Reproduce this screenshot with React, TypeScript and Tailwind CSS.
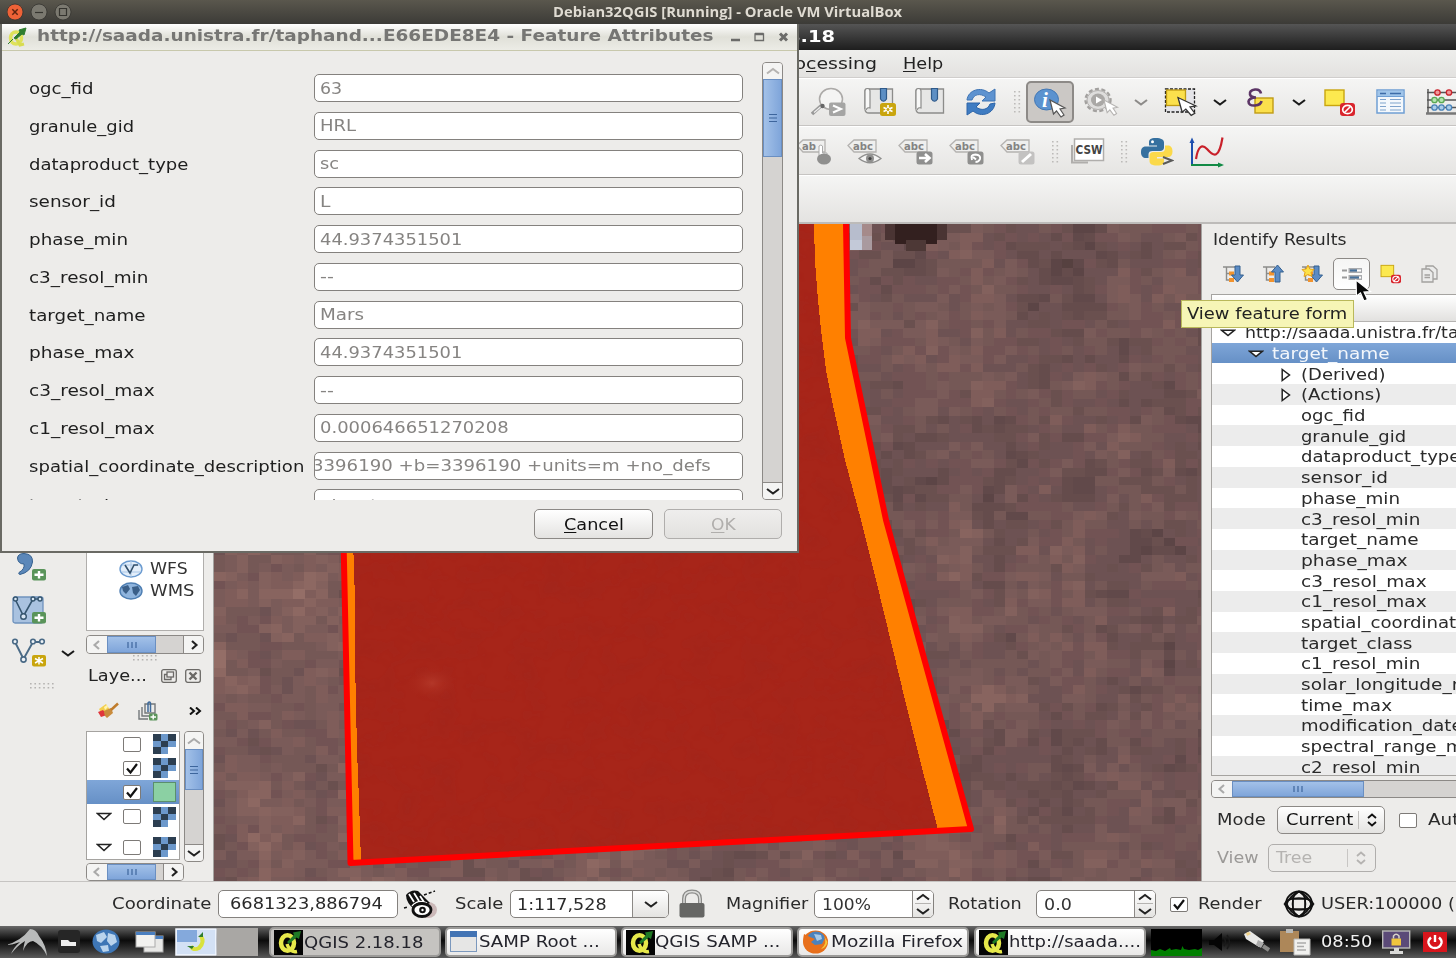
import React, { useLayoutEffect, useRef, useState } from "react";

/* ---------- text ---------- */

type TxtProps = { children: React.ReactNode; w?: number; className?: string };

/* Wide-set label; with `w` the glyph run is scaled to fill exactly that width. */
function Txt({ children, w, className = "" }: TxtProps) {
  const ref = useRef<HTMLSpanElement>(null);
  const [scale, setScale] = useState(1.19);
  useLayoutEffect(() => {
    if (w && ref.current) setScale(w / ref.current.offsetWidth);
  }, [w]);
  return (
    <span className={`inline-block shrink-0 whitespace-nowrap ${className}`} style={w ? { width: w } : undefined}>
      <span ref={ref} className="inline-block origin-left whitespace-nowrap" style={{ transform: `scaleX(${scale})` }}>
        {children}
      </span>
    </span>
  );
}

/* ---------- map ---------- */

function hash(x: number, y: number, s: number) {
  let h = (x * 374761393 + y * 668265263 + s * 1442695041) | 0;
  h = Math.imul(h ^ (h >>> 13), 1274126177);
  return ((h ^ (h >>> 16)) >>> 0) / 4294967295;
}

function smooth(x: number, y: number, s: number) {
  const xi = Math.floor(x);
  const yi = Math.floor(y);
  const fx = x - xi;
  const fy = y - yi;
  const a = hash(xi, yi, s) * (1 - fx) + hash(xi + 1, yi, s) * fx;
  const b = hash(xi, yi + 1, s) * (1 - fx) + hash(xi + 1, yi + 1, s) * fx;
  return a * (1 - fy) + b * fy;
}

const TERRAIN = [
  "#4f3d3b", "#564140", "#5c4546", "#61494a", "#654c4c", "#6a504f", "#6d5253", "#725354",
  "#755856", "#7a5b59", "#7f5d5a", "#83615d", "#88645f", "#8d6862", "#946e67", "#9c766e",
];

function terrainPaths() {
  const d = TERRAIN.map(() => "");
  const cw = 11.3;
  const ch = 8.7;
  for (let j = 0; j < 76; j++) {
    for (let i = 0; i < 88; i++) {
      const x = 214 + i * cw;
      const y = 224 + j * ch;
      if (x > 365 && x < 800 && y < 830) continue;
      const streak = Math.max(0, 1 - Math.abs(x - 955) / 45) * (y > 420 && y < 720 ? 2.2 : 0.6);
      const mean = (x < 400 ? 8.8 : x < 1000 && y > 800 ? 8.2 : 6.3) + streak;
      const n =
        mean +
        (smooth(i / 4, j / 6, 3) - 0.5) * 4.5 +
        (smooth(i / 1.4, j / 2.2, 9) - 0.5) * 5.5 +
        (hash(i, j, 21) - 0.5) * 4;
      const k = Math.max(0, Math.min(15, Math.round(n)));
      d[k] += `M${x.toFixed(1)} ${y.toFixed(1)}h11.8v9.2h-11.8z`;
    }
  }
  return d;
}

const PATHS = terrainPaths();

function MapCanvas() {
  return (
    <svg className="block h-[657px] w-[987px] shrink-0" viewBox="214 224 987 657">
      <defs>
        <radialGradient id="crater">
          <stop offset="0" stopColor="#c04a38" stopOpacity="0.5" />
          <stop offset="1" stopColor="#a82618" stopOpacity="0" />
        </radialGradient>
        <filter id="grain" x="0" y="0" width="1" height="1">
          <feTurbulence type="fractalNoise" baseFrequency="0.035 0.05" numOctaves="3" seed="4" />
          <feColorMatrix values="0 0 0 0 0.25  0 0 0 0 0.02  0 0 0 0 0.02  0.9 0 0 0 -0.38" />
          <feComposite in2="SourceGraphic" operator="in" />
        </filter>
      </defs>
      <rect x="214" y="224" width="987" height="657" fill="#6f5350" />
      <g shapeRendering="crispEdges">
        {PATHS.map((p, i) => (
          <path key={i} d={p} fill={TERRAIN[i]} />
        ))}
        <path d="M850 224h12v16h-12z" fill="#b7bdcd" />
        <path d="M850 240h12v10h-12z" fill="#c3c9d8" />
        <path d="M862 232h10v18h-10z" fill="#a99a9f" />
        <path d="M862 224h10v12h-10z" fill="#a58a8a" />
        <path d="M885 224h62v16h-62z" fill="#4a3433" />
        <path d="M895 224h42v20h-42z" fill="#33201f" />
        <path d="M906 240h20v11h-20z" fill="#4d3836" />
      </g>
      <path d="M342 224H846L848 338L886 520L971 829L350 863z" fill="#a72519" />
      <path d="M342 224H846L848 338L886 520L971 829L350 863z" fill="#fff" filter="url(#grain)" opacity="0.35" />
      <ellipse cx="432" cy="683" rx="26" ry="18" fill="url(#crater)" />
      <path
        d="M814 224L815 262L818 300L821 330L826 370L834 410L845 460L861 520L876 580L893 650L905 700L920 760L938 830L972 829L886 520L848 338L846 224z"
        fill="#ff8000"
        shapeRendering="crispEdges"
      />
      <path d="M345 540H353L355 600V660L357 750L359 800L361 862H350z" fill="#ff8000" shapeRendering="crispEdges" />
      <path d="M343.500 540L350.500 863L971 829L886 520L848 338L846 224" fill="none" stroke="#fe0000" strokeWidth="6" strokeLinejoin="round" />
    </svg>
  );
}

/* ---------- small widgets ---------- */

function Chevron({ dir = "down", className = "" }: { dir?: "down" | "up" | "left" | "right"; className?: string }) {
  const d = {
    down: "M1 3L7 7.500L13 3",
    up: "M1 7.500L7 3L13 7.500",
    left: "M9 1L4.500 5L9 9",
    right: "M5 1L9.500 5L5 9",
  }[dir];
  return (
    <svg className={`block h-[10px] w-[14px] shrink-0 ${className}`} viewBox="0 0 14 10" fill="none" stroke="currentColor" strokeWidth="2.100">
      <path d={d} />
    </svg>
  );
}

function Dots({ vertical = false, className = "" }: { vertical?: boolean; className?: string }) {
  return vertical ? (
    <svg className={`block h-[22px] w-[8px] shrink-0 ${className}`} viewBox="0 0 8 22" fill="#bdbbb9">
      {[0, 4, 8, 12, 16, 20].map((y) => (
        <path key={y} d={`M1 ${y}h1.600v1.600h-1.600zM5.500 ${y}h1.600v1.600h-1.600z`} />
      ))}
    </svg>
  ) : (
    <svg className={`block h-[6px] w-[24px] shrink-0 ${className}`} viewBox="0 0 24 6" fill="#b5b3b1">
      {[0, 4.4, 8.8, 13.2, 17.6, 22].map((x) => (
        <path key={x} d={`M${x} 0h1.600v1.600h-1.600zM${x} 4h1.600v1.600h-1.600z`} />
      ))}
    </svg>
  );
}

const btn = "flex shrink-0 items-center justify-center border-[1.500px] border-[#8c8986] bg-linear-to-b from-white to-[#e4e3e1]";
const hThumb = "flex shrink-0 items-center justify-center border border-[#6a8fc2] bg-linear-to-b from-[#a3c1e8] to-[#7fa5da] text-[#3d659c]";
const vThumb = "flex shrink-0 items-center justify-center border border-[#6a8fc2] bg-linear-to-r from-[#a3c1e8] to-[#7fa5da] text-[#3d659c]";

function Grip({ vertical = false }: { vertical?: boolean }) {
  return (
    <svg className="block h-[10px] w-[10px]" viewBox="0 0 10 10" stroke="currentColor" strokeWidth="1.200">
      <path d={vertical ? "M1 1.500h8M1 5h8M1 8.500h8" : "M1 2v6M5 2v6M9 2v6"} />
    </svg>
  );
}

function Check({ on = false, className = "" }: { on?: boolean; className?: string }) {
  return (
    <span className={`block h-[15px] w-[18px] shrink-0 rounded-[2px] border-[1.500px] border-[#7d7a77] bg-white ${className}`}>
      {on && (
        <svg className="block h-full w-full" viewBox="0 0 16 12" fill="none" stroke="#111" strokeWidth="2.200">
          <path d="M3 6L6.500 10L13 1.500" />
        </svg>
      )}
    </span>
  );
}

function Spin({ value, tw, className }: { value: string; tw: number; className: string }) {
  return (
    <div className={`flex h-[28px] shrink-0 overflow-hidden rounded-[5px] border-[1.500px] border-[#84817e] bg-white ${className}`}>
      <div className="flex flex-1 items-center pt-[2px] pl-[7px] text-[#333]">
        <Txt w={tw}>{value}</Txt>
      </div>
      <div className="flex w-[21px] flex-col items-center justify-around border-l border-[#8c8986] bg-linear-to-b from-white to-[#e4e3e1] text-[#222]">
        <Chevron dir="up" className="w-[12px]" />
        <div className="h-px w-[16px] bg-[#b5b3b1]" />
        <Chevron className="w-[12px]" />
      </div>
    </div>
  );
}

function UpDown() {
  return (
    <svg className="block h-[14px] w-[10px]" viewBox="0 0 10 14" fill="none" stroke="currentColor" strokeWidth="1.800">
      <path d="M1 5L5 1.500L9 5M1 9L5 12.500L9 9" />
    </svg>
  );
}

const CURSOR = "M0 0L3.500 14L6.500 11L11 17L14 15L10 9L15 8z";

function Minus({ x, y }: { x: number; y: number }) {
  return (
    <g transform={`translate(${x} ${y})`}>
      <rect width="15" height="13" rx="3" fill="#d9252d" />
      <ellipse cx="7.500" cy="6.500" rx="4.800" ry="4.200" fill="none" stroke="#fff" strokeWidth="1.700" />
      <path d="M4 10L11 3" stroke="#fff" strokeWidth="1.600" />
    </g>
  );
}

/* ---------- tool bars ---------- */

function Bookmark({ star = false, className = "" }: { star?: boolean; className?: string }) {
  return (
    <svg className={`block h-[30px] w-[34px] shrink-0 ${className}`} viewBox="0 0 34 30">
      <path d="M3 2H28.500V26H5Q1 26 1 22V4Q1 2 3 2z" fill="#e6e6e5" stroke="#8c8c8a" strokeWidth="1.300" />
      <path d="M1 22V4Q1 1.500 3.500 1.500T6 4V21Q3 20 2 23" fill="#f8f8f7" stroke="#8c8c8a" strokeWidth="1.200" />
      <path d="M16.500 1.500H22.500V12Q19.500 16.500 16.500 12z" fill="#5d8fc4" stroke="#2f5a8a" strokeWidth="1.200" />
      {star && (
        <g>
          <rect x="16" y="16" width="16" height="13" rx="2.500" fill="#c9a50e" />
          <path d="M24 18v9M19.500 20.500l9 4M28.500 20.500l-9 4" stroke="#fff" strokeWidth="1.600" />
          <circle cx="24" cy="22.500" r="2" fill="#c9a50e" stroke="#fff" />
        </g>
      )}
    </svg>
  );
}

function Tag({ label = "abc", className = "", children }: { label?: string; className?: string; children: React.ReactNode }) {
  return (
    <svg className={`block h-[28px] w-[35px] shrink-0 ${className}`} viewBox="0 0 35 28">
      <path d="M1 7.500L7 2H29V14H7z" fill="#efefee" stroke="#b4b2b0" strokeWidth="1.300" />
      <text x="6" y="12" fontSize="11" fontWeight="bold" fill="#838383" textLength={label === "abc" ? 20 : 14} lengthAdjust="spacingAndGlyphs">
        {label}
      </text>
      {children}
    </svg>
  );
}

function ToolbarMain() {
  return (
    <div className="flex h-[48px] items-center border-t border-b border-t-white border-b-[#c6c4c2] bg-linear-to-b from-[#f5f5f4] to-[#e6e5e3] pl-[811px]">
      <svg className="block h-[30px] w-[36px] shrink-0" viewBox="0 0 36 30">
        <path d="M1 27L11 18" stroke="#999" strokeWidth="3.500" />
        <path d="M3 25.500L10 19.500" stroke="#eee" strokeWidth="1.200" />
        <ellipse cx="20" cy="12" rx="11.500" ry="10.500" fill="#f4f4f3" stroke="#acaaa8" strokeWidth="1.500" />
        <circle cx="11.500" cy="19" r="2.200" fill="#666" />
        <rect x="18" y="15.500" width="16.500" height="13.500" rx="2" fill="#a5a5a4" />
        <path d="M22 18.500L30 22L22 25.500" fill="none" stroke="#fff" strokeWidth="2" />
      </svg>
      <Bookmark star className="ml-[17px]" />
      <Bookmark className="ml-[17px]" />
      <svg className="ml-[16px] block h-[30px] w-[32px] shrink-0" viewBox="0 0 32 30">
        <path d="M2 13C3 3 16-1 24 6L30 2V14H17L21 10C15 6 9 7 7 13z" fill="#5e93d0" stroke="#3e74b4" />
        <path d="M30 16C29 27 16 31 8 24L2 28V16H15L11 20C16 24 23 23 25 17z" fill="#3f7cc2" stroke="#2e65a8" />
      </svg>
      <Dots vertical className="ml-[16px]" />
      <div className="ml-[5px] flex h-[42px] w-[48px] shrink-0 items-center justify-center rounded-[5px] border-2 border-[#8d8a87] bg-[#cbc8c5]">
        <svg className="block h-[32px] w-[36px]" viewBox="0 0 36 32">
          <ellipse cx="14.500" cy="13.500" rx="12" ry="10.500" fill="#5b92cf" stroke="#4478b4" />
          <text x="10" y="21" fontSize="21" fontStyle="italic" fontWeight="bold" fontFamily="Liberation Serif, serif" fill="#fff">i</text>
          <path d={CURSOR} transform="translate(18 14)" fill="#fff" stroke="#555" strokeWidth="1.200" />
        </svg>
      </div>
      <svg className="ml-[10px] block h-[30px] w-[36px] shrink-0" viewBox="0 0 36 30">
        <ellipse cx="14" cy="13" rx="12.500" ry="11" fill="#e6e5e4" stroke="#a3a19f" strokeWidth="2.400" strokeDasharray="4 2.500" />
        <ellipse cx="14" cy="13" rx="11" ry="9.500" fill="#dedddc" stroke="#b2b0ae" />
        <ellipse cx="14" cy="13" rx="7" ry="6.500" fill="#aaa8a6" />
        <path d="M12 9.500L18 13L12 16.500z" fill="#fff" />
        <path d={CURSOR} transform="translate(20 13) scale(.9)" fill="#fff" stroke="#b5b3b1" strokeWidth="1.200" />
      </svg>
      <Chevron className="ml-[14px] text-[#8d8b89]" />
      <svg className="ml-[16px] block h-[30px] w-[34px] shrink-0" viewBox="0 0 34 30">
        <rect x="1.500" y="2" width="29" height="23" fill="#e4e4e8" stroke="#222" strokeWidth="1.300" strokeDasharray="3 1.500" />
        <rect x="2.500" y="3" width="19" height="15.500" fill="#fbe04c" stroke="#c09c14" strokeWidth="1.300" />
        <path d={CURSOR} transform="translate(14 10.500) scale(1.200 1.050)" fill="#fff" stroke="#333" strokeWidth="1.100" />
      </svg>
      <Chevron className="ml-[15px] text-[#1a1a1a]" />
      <svg className="ml-[19px] block h-[30px] w-[30px] shrink-0" viewBox="0 0 30 30">
        <rect x="9" y="11" width="18" height="15" fill="#fbe04c" stroke="#c09c14" strokeWidth="1.400" />
        <path d="M15 6.500Q14 2 9 2.500Q3 3.500 4 7.500Q5 10.500 10 10.500Q3 11 2.500 14.500Q2.500 19 9 18.500Q15 18 15.500 14" fill="none" stroke="#5c3566" strokeWidth="2.600" />
      </svg>
      <Chevron className="ml-[16px] text-[#1a1a1a]" />
      <svg className="ml-[17px] block h-[30px] w-[34px] shrink-0" viewBox="0 0 34 30">
        <rect x="2" y="3" width="19" height="15.500" fill="#fce94f" stroke="#c9a50e" strokeWidth="1.400" />
        <Minus x={17} y={16} />
      </svg>
      <svg className="ml-[19px] block h-[30px] w-[30px] shrink-0" viewBox="0 0 30 30">
        <rect x="1" y="3" width="27" height="23" fill="#f4f8fc" stroke="#6f9fd4" strokeWidth="1.500" />
        <rect x="2" y="4" width="25" height="5.500" fill="#9fc5ea" />
        <path d="M1 9.500H28" stroke="#6f9fd4" />
        <path d="M4 6.500H10M14 6.500H25" stroke="#3d6ca8" strokeWidth="1.500" />
        <path d="M4 12.500H10M4 16H10M4 19.500H10M4 23H10M14 12.500H25M14 16H25M14 19.500H25M14 23H25" stroke="#7fa3cc" strokeWidth="1.200" />
      </svg>
      <svg className="ml-[20px] block h-[30px] w-[34px] shrink-0" viewBox="0 0 34 30">
        <path d="M2 2V26M1 5.500H34M1 13H34M1 20.500H34" stroke="#555" strokeWidth="1.400" />
        <path d="M0 26.500H34" stroke="#777" strokeWidth="2.500" />
        <g strokeWidth="1.300">
          <g fill="#f09a9a" stroke="#c8242c"><circle cx="11.500" cy="5.500" r="2.700" /><circle cx="23" cy="5.500" r="2.700" /></g>
          <g fill="#b5e6b0" stroke="#5aa854"><circle cx="8.500" cy="13" r="2.700" /><circle cx="15.500" cy="13" r="2.700" /></g>
          <g fill="#a9cdea" stroke="#4a83b8"><circle cx="8.500" cy="20.500" r="2.700" /><circle cx="15.500" cy="20.500" r="2.700" /><circle cx="23" cy="20.500" r="2.700" /></g>
        </g>
      </svg>
    </div>
  );
}

function ToolbarLabels() {
  return (
    <div className="flex h-[49px] items-center border-t border-b border-t-white border-b-[#c6c4c2] bg-linear-to-b from-[#f5f5f4] to-[#e6e5e3] pt-[2px] pl-[796px]">
      <Tag label="ab">
        <path d="M23 20V8Q25 6 26.500 8V15H31V20" fill="#fff" stroke="#aaa" />
        <ellipse cx="28" cy="21" rx="7" ry="5.500" fill="#8f8f8e" />
      </Tag>
      <Tag className="ml-[16px]">
        <path d="M12 20.500Q23 11.500 34 20.500Q23 29 12 20.500z" fill="#f4f4f3" stroke="#8f8f8e" strokeWidth="1.300" />
        <circle cx="23" cy="20.500" r="4" fill="#8f8f8e" />
        <circle cx="23" cy="20.500" r="1.600" fill="#444" />
      </Tag>
      <Tag className="ml-[16px]">
        <rect x="18.500" y="13.500" width="16" height="13" rx="2.500" fill="#8f8f8e" />
        <path d="M21 20H31M27 16L31.500 20L27 24" fill="none" stroke="#fff" strokeWidth="2.600" />
      </Tag>
      <Tag className="ml-[16px]">
        <rect x="18.500" y="13.500" width="16" height="13" rx="2.500" fill="#8f8f8e" />
        <path d="M23 22Q21 16.500 26.500 16.500Q32 17 31 21Q30 24 26.500 24M24 19L27 21.500" fill="none" stroke="#fff" strokeWidth="2" />
      </Tag>
      <Tag className="ml-[16px]">
        <rect x="18.500" y="13.500" width="16" height="13" rx="2.500" fill="#c3c2c1" />
        <path d="M22 24L31 16" stroke="#fff" strokeWidth="3" />
      </Tag>
      <Dots vertical className="ml-[16px]" />
      <svg className="ml-[12px] block h-[30px] w-[36px] shrink-0" viewBox="0 0 36 30">
        <path d="M1 8V25.500H17" fill="none" stroke="#b0aeac" strokeWidth="2" />
        <rect x="3.500" y="2" width="29" height="21.500" fill="#fff" stroke="#b0aeac" strokeWidth="1.500" />
        <text x="4.500" y="16.500" fontSize="11.500" fontWeight="bold" fill="#444" textLength="27" lengthAdjust="spacingAndGlyphs">CSW</text>
      </svg>
      <Dots vertical className="ml-[13px]" />
      <svg className="ml-[12px] block h-[30px] w-[34px] shrink-0" viewBox="0 0 34 30">
        <path d="M16 1C10 1 9 3 9 5.500V8.500H17V9.500H6C2 9.500 1 12 1 15.500S3 21 6 21H8.500V17.500C8.500 15 10 14 12.500 14H20C22.500 14 24 12.500 24 10.500V5.500C24 2.500 21 1 16 1z" fill="#35709f" />
        <path d="M17 28.500C23 28.500 24 26.500 24 24V21.500H17V20H28C31 20 32.500 18 32.500 14.500S31 8.500 28 8.500H25V11.500C25 14 23.500 15 21 15H13.500C11 15 9.500 16.500 9.500 18.500V24C9.500 27 12 28.500 17 28.500z" fill="#fbd94a" />
        <circle cx="12.500" cy="4.800" r="1.500" fill="#fff" />
        <path d="M23 20L32 23.500L23 27" fill="none" stroke="#5a5a58" strokeWidth="1.900" />
      </svg>
      <svg className="ml-[14px] block h-[32px] w-[38px] shrink-0" viewBox="0 0 38 32">
        <path d="M4 29V5" stroke="#1d4fae" strokeWidth="2" />
        <path d="M4 1.500L1.500 7H6.500z" fill="#1d4fae" />
        <path d="M3 29H32" stroke="#128a45" strokeWidth="2" />
        <path d="M36 29L30 26.500V31.500z" fill="#128a45" />
        <path d="M8 23C10 10 14 8 19 13C26 21 31 23 34.500 1.500" fill="none" stroke="#c9202a" strokeWidth="2.200" />
      </svg>
    </div>
  );
}

/* ---------- left docks ---------- */

function Raster() {
  return (
    <svg className="block h-[20px] w-[23px] shrink-0" viewBox="0 0 3 3" preserveAspectRatio="none" shapeRendering="crispEdges">
      <path d="M0 0h3v3h-3z" fill="#6c98cb" />
      <path d="M0 0h1v1h-1zM2 0h1v1h-1zM1 1h1v1h-1zM0 2h1v1h-1z" fill="#2c3e50" />
      <path d="M2 2h1v1h-1z" fill="#fff" />
    </svg>
  );
}

function Plus({ star = false }: { star?: boolean }) {
  return (
    <g>
      <rect x="21" y="17" width="14" height="11.500" rx="2" fill={star ? "#c9a50e" : "#5a945a"} />
      <path d={star ? "M28 19v7.500M24 20.500l8 4.500M32 20.500l-8 4.500" : "M28 19v7.500M23.500 22.700h9"} stroke="#fff" strokeWidth={star ? 1.5 : 2.4} />
    </g>
  );
}

function SideTools() {
  return (
    <div className="flex w-[86px] shrink-0 flex-col pt-[328px]">
      <svg className="ml-[11px] block h-[30px] w-[36px] shrink-0" viewBox="0 0 36 30">
        <path d="M6.500 6Q7 1.500 13 1.500Q22 2 21.500 10Q20 20 9 22.500Q7 22 8 20.500Q14 17 13 12Q7 12 6.500 6z" fill="#5b87b9" stroke="#35608f" />
        <Plus />
      </svg>
      <svg className="mt-[13px] ml-[11px] block h-[30px] w-[36px] shrink-0" viewBox="0 0 36 30">
        <rect x="2" y="2" width="30" height="26" rx="2" fill="#a9c2e0" stroke="#6f92bd" strokeWidth="1.300" />
        <path d="M4 4L12.500 21L22 4H30" fill="none" stroke="#35556f" strokeWidth="1.600" />
        <g fill="#d8e6f4" stroke="#35556f" strokeWidth="1.400"><circle cx="4.500" cy="4" r="2" /><circle cx="12.500" cy="21.500" r="2.800" /><circle cx="22" cy="4" r="2" /><circle cx="29" cy="4" r="2" /></g>
        <Plus />
      </svg>
      <div className="mt-[13px] flex items-center">
        <svg className="ml-[11px] block h-[30px] w-[36px] shrink-0" viewBox="0 0 36 30">
          <path d="M4 4L12.500 21L22 4H31" fill="none" stroke="#4a6a86" strokeWidth="1.900" />
          <g fill="#eef3f8" stroke="#4a6a86" strokeWidth="1.600"><circle cx="4" cy="3.500" r="2.300" /><circle cx="12.500" cy="21.500" r="2.600" /><circle cx="22" cy="3.500" r="2.300" /><circle cx="31" cy="3.500" r="2.300" /></g>
          <Plus star />
        </svg>
        <Chevron className="ml-[14px] text-[#1a1a1a]" />
      </div>
      <Dots className="mt-[15px] ml-[30px]" />
    </div>
  );
}

const LAYERS = [
  { on: false, arrow: false, sel: false, h: "h-[24px]" },
  { on: true, arrow: false, sel: false, h: "h-[24px]" },
  { on: true, arrow: false, sel: true, h: "h-[24px]" },
  { on: false, arrow: true, sel: false, h: "h-[25px]" },
  { on: false, arrow: true, sel: false, h: "h-[36px]" },
];

function Docks() {
  return (
    <div className="flex w-[118px] shrink-0 flex-col">
      <div className="flex h-[407px] shrink-0 flex-col justify-end border border-[#b0aeac] bg-white pb-[28px] pl-[32px] text-[#333]">
        <div className="flex h-[22px] items-center">
          <svg className="block h-[18px] w-[24px]" viewBox="0 0 24 18">
            <ellipse cx="12" cy="9" rx="11" ry="8" fill="#e3eefa" stroke="#6b9bd0" strokeWidth="1.400" />
            <path d="M3 5H21M3 12H21M12 1V17" stroke="#a9c6e6" />
            <path d="M6 5L11 13L15 5H19" fill="none" stroke="#33506c" strokeWidth="1.600" />
          </svg>
          <Txt w={38} className="ml-[7px]">WFS</Txt>
        </div>
        <div className="flex h-[22px] items-center">
          <svg className="block h-[18px] w-[24px]" viewBox="0 0 24 18">
            <ellipse cx="12" cy="9" rx="11" ry="8" fill="#8fb4dd" stroke="#4f7fb3" strokeWidth="1.400" />
            <path d="M3 5L9 3L11 7L7 12L4 9zM13 5L19 4L21 8L17 14L14 11z" fill="#3b5f88" />
          </svg>
          <Txt w={44} className="ml-[7px]">WMS</Txt>
        </div>
      </div>
      <div className="mt-[4px] flex h-[19px] shrink-0 overflow-hidden rounded-[4px] border border-[#8c8986] bg-[#d5d3d1]">
        <div className="flex w-[20px] items-center justify-center bg-[#f4f4f3] text-[#aaa]"><Chevron dir="left" /></div>
        <div className={`${hThumb} w-[49px]`}><Grip /></div>
        <div className="flex-1" />
        <div className="flex w-[20px] items-center justify-center border-l border-[#8c8986] bg-[#f4f4f3] text-[#222]"><Chevron dir="right" /></div>
      </div>
      <Dots className="mt-px ml-[47px]" />
      <div className="mt-[3px] flex h-[24px] items-center pl-[2px] text-[#222]">
        <Txt w={59}>Laye...</Txt>
        <svg className="ml-[14px] block h-[14px] w-[16px]" viewBox="0 0 16 14" fill="none" stroke="#6b6966" strokeWidth="1.300">
          <rect x=".7" y=".7" width="14.600" height="12.600" rx="2" /><rect x="6" y="3" width="6.500" height="5" /><path d="M6 5.500H3.500V10.500H10V8" />
        </svg>
        <svg className="ml-[8px] block h-[14px] w-[16px]" viewBox="0 0 16 14" fill="none" stroke="#6b6966" strokeWidth="1.300">
          <rect x=".7" y=".7" width="14.600" height="12.600" rx="2" /><path d="M4.500 3.500L11.500 10.500M11.500 3.500L4.500 10.500" strokeWidth="2.400" />
        </svg>
      </div>
      <div className="mt-[11px] flex h-[24px] items-center">
        <svg className="ml-[11px] block h-[18px] w-[22px]" viewBox="0 0 22 18">
          <path d="M2 7L9 2L13 8L6 14z" fill="#f3cf4d" /><path d="M1 10L6 8L10 13L4 15z" fill="#e0353b" /><path d="M7 5L10 3L11 5L8 8z" fill="#fff3b0" />
          <path d="M7 9L14 6L16 11L10 16Q7 14 7 9z" fill="#c98b3c" /><path d="M14 8L21 1.500" stroke="#c07c2c" strokeWidth="2.500" />
        </svg>
        <svg className="ml-[18px] block h-[20px] w-[22px]" viewBox="0 0 22 20" fill="none" stroke="#73777a" strokeWidth="1.400">
          <path d="M2 9V18H11M5 6V15H14M8 3H18V12H8z" /><path d="M11 11V2Q12.500 0 13.500 2V11" stroke="#3f6b9c" strokeWidth="1.500" />
          <rect x="12" y="12.500" width="8.500" height="7" rx="1.500" fill="#5a945a" stroke="none" /><path d="M16.200 13.500v5M13.500 16h5.500" stroke="#fff" />
        </svg>
        <svg className="ml-[30px] block h-[8px] w-[13px]" viewBox="0 0 13 8" fill="none" stroke="#111" strokeWidth="2"><path d="M1 .5L5 4L1 7.500M7 .5L11 4L7 7.500" /></svg>
      </div>
      <div className="mt-[8px] flex">
        <div className="flex h-[129px] w-[94px] shrink-0 flex-col overflow-hidden border border-[#a5a3a0] bg-white">
          {LAYERS.map((l, i) => (
            <div key={i} className={`flex shrink-0 items-center pl-[9px] ${l.h} ${l.sel ? "bg-linear-to-b from-[#7fa6d8] to-[#6690c6]" : ""}`}>
              <svg className="block h-[9px] w-[16px]" viewBox="0 0 16 9">
                {l.arrow && <path d="M1.500 1.500H14.500L8 7.500z" fill="#fff" stroke="#222" strokeWidth="1.600" />}
              </svg>
              <Check on={l.on} className="ml-[11px]" />
              <span className="ml-[12px] block">
                {l.sel ? <span className="block h-[20px] w-[23px] border border-[#5b8f6c] bg-[#8bd0a3]" /> : <Raster />}
              </span>
            </div>
          ))}
        </div>
        <div className="ml-[4px] flex h-[131px] w-[21px] flex-col overflow-hidden rounded-[4px] border border-[#8c8986] bg-[#d5d3d1]">
          <div className="flex h-[17px] items-center justify-center bg-[#f4f4f3] text-[#aaa]"><Chevron dir="up" className="w-[11px]" /></div>
          <div className={`${vThumb} h-[41px]`}><Grip vertical /></div>
          <div className="flex-1" />
          <div className="flex h-[17px] items-center justify-center border-t border-[#8c8986] bg-[#f4f4f3] text-[#222]"><Chevron className="w-[11px]" /></div>
        </div>
      </div>
      <div className="mt-px flex h-[18px] w-[98px] shrink-0 overflow-hidden rounded-[4px] border border-[#8c8986] bg-[#d5d3d1]">
        <div className="flex w-[20px] items-center justify-center bg-[#f4f4f3] text-[#aaa]"><Chevron dir="left" /></div>
        <div className={`${hThumb} w-[49px]`}><Grip /></div>
        <div className="flex-1" />
        <div className="flex w-[20px] items-center justify-center border-l border-[#8c8986] bg-[#f4f4f3] text-[#222]"><Chevron dir="right" /></div>
      </div>
    </div>
  );
}

/* ---------- identify panel ---------- */

const FIELDS: [string, number][] = [
  ["ogc_fid", 63], ["granule_gid", 104], ["dataproduct_type", 159], ["sensor_id", 86], ["phase_min", 98], ["c3_resol_min", 118],
  ["target_name", 117], ["phase_max", 105], ["c3_resol_max", 125], ["c1_resol_max", 125], ["spatial_coordinate_description", 275],
  ["target_class", 110], ["c1_resol_min", 118], ["solar_longitude_min", 184], ["time_max", 90], ["modification_date", 160],
  ["spectral_range_min", 178], ["c2_resol_min", 118],
];

function TreeIcon({ kind }: { kind: "down" | "up" | "star" }) {
  return (
    <svg className="block h-[20px] w-[22px] shrink-0" viewBox="0 0 22 20">
      <path d="M1 3H13M4.500 3V16H8M4.500 9.500H8" fill="none" stroke="#8c8c8a" strokeWidth="1.400" />
      <path d="M7 7.500h5v4h-5zM7 14h5v4h-5z" fill="#f2932e" />
      {kind === "up" ? (
        <path d="M15.500 1L21.500 8H18V18H13V8H9.500z" fill="#5b8bc4" stroke="#35608f" />
      ) : (
        <path d="M15.500 18L21.500 11H18V2H13V11H9.500z" fill="#5b8bc4" stroke="#35608f" />
      )}
      {kind === "star" && <path d="M7 1L8.800 5L13 5.500L10 8.500L11 12.500L7 10.500L3 12.500L4 8.500L1 5.500L5.200 5z" fill="#fde047" stroke="#e8a317" />}
    </svg>
  );
}

function IdentifyPanel() {
  return (
    <div className="flex w-[255px] shrink-0 flex-col overflow-hidden border-l border-[#a5a3a0] text-[#2a2a2a]">
      <div className="flex h-[30px] shrink-0 items-center pt-px pl-[11px]"><Txt w={134}>Identify Results</Txt></div>
      <div className="flex h-[40px] shrink-0 items-center pl-[20px]">
        <TreeIcon kind="down" />
        <span className="ml-[18px]"><TreeIcon kind="up" /></span>
        <span className="ml-[17px]"><TreeIcon kind="star" /></span>
        <div className="ml-[10px] flex h-[32px] w-[37px] shrink-0 items-center justify-center rounded-[5px] border-[1.500px] border-[#8c8986] bg-linear-to-b from-[#f5f5f4] to-white">
          <svg className="block h-[16px] w-[22px]" viewBox="0 0 22 16"><path d="M1 4.500H6M1 11.500H6" stroke="#999" strokeWidth="2.200" /><path d="M7.500 4.500H21M7.500 11.500H21" stroke="#a9abae" strokeWidth="5" /><path d="M9 4.500H16M9 11.500H18" stroke="#45719c" strokeWidth="2.200" /><path d="M16 4.500H20M18 11.500H20" stroke="#fff" strokeWidth="2.200" /></svg>
        </div>
        <svg className="ml-[9px] block h-[20px] w-[24px] shrink-0" viewBox="0 0 34 30"><rect x="2" y="2" width="19" height="17" fill="#fce94f" stroke="#c9a50e" strokeWidth="1.400" /><Minus x={17} y={16} /></svg>
        <svg className="ml-[18px] block h-[18px] w-[18px] shrink-0" viewBox="0 0 18 18" fill="#ebebea" stroke="#a3a19f" strokeWidth="1.300"><path d="M5 1H12L16 4.500V14H5z" /><path d="M1 4H8L12 7.500V17H1z" /><path d="M3.500 10H9M3.500 12.500H9" /></svg>
      </div>
      <div className="ml-[9px] flex h-[482px] w-[250px] shrink-0 flex-col overflow-hidden border-[1.500px] border-[#a5a3a0] bg-white">
        <div className="h-[27px] shrink-0 border-b border-[#b5b3b1] bg-linear-to-b from-white to-[#e2e1df]" />
        <div className="flex h-[20.700px] shrink-0 items-center pt-[2px] pl-[8px]">
          <svg className="block h-[8px] w-[16px] shrink-0" viewBox="0 0 16 8"><path d="M1.500 1.200H14.500L8 6.500z" fill="#fff" stroke="#222" strokeWidth="1.600" /></svg>
          <Txt w={284} className="ml-[9px]">http://saada.unistra.fr/taphandle</Txt>
        </div>
        <div className="flex h-[20.700px] shrink-0 items-center bg-linear-to-b from-[#7fa6d8] to-[#6690c6] pt-[2px] pl-[36px] text-[#f2f6fb]">
          <svg className="block h-[8px] w-[16px] shrink-0" viewBox="0 0 16 8"><path d="M1.500 1.200H14.500L8 6.500z" fill="#fff" stroke="#222" strokeWidth="1.600" /></svg>
          <Txt w={118} className="ml-[8px]">target_name</Txt>
        </div>
        {["(Derived)", "(Actions)"].map((t, i) => (
          <div key={t} className={`flex h-[20.700px] shrink-0 items-center pt-[2px] pl-[69px] ${i ? "bg-[#ececec]" : ""}`}>
            <svg className="block h-[14px] w-[10px] shrink-0" viewBox="0 0 10 14"><path d="M1.200 1.500V12.500L8.500 7z" fill="#fff" stroke="#222" strokeWidth="1.500" /></svg>
            <Txt w={i ? 81 : 84} className="ml-[10px]">{t}</Txt>
          </div>
        ))}
        {FIELDS.map(([f, w], i) => (
          <div key={f} className={`flex h-[20.700px] shrink-0 items-center pt-[2px] pl-[89px] ${i % 2 ? "bg-[#ececec]" : ""}`}><Txt w={w + 1}>{f}</Txt></div>
        ))}
      </div>
      <div className="mt-[4px] ml-[9px] flex h-[18px] w-[260px] shrink-0 overflow-hidden rounded-[4px] border border-[#8c8986] bg-[#d5d3d1]">
        <div className="flex w-[20px] items-center justify-center bg-[#f4f4f3] text-[#aaa]"><Chevron dir="left" /></div>
        <div className={`${hThumb} w-[132px]`}><Grip /></div>
      </div>
      <div className="mt-[8px] flex h-[28px] shrink-0 items-center pl-[15px]">
        <Txt w={49}>Mode</Txt>
        <div className={`${btn} ml-[11px] h-[28px] w-[108px] rounded-[5px] text-[#111]`}>
          <Txt w={67}>Current</Txt><span className="ml-[5px] h-[18px] w-px bg-[#c0bebc]" /><span className="ml-[8px]"><UpDown /></span>
        </div>
        <Check className="ml-[14px]" />
        <Txt w={60} className="ml-[11px]">Auto o</Txt>
      </div>
      <div className="mt-[10px] flex h-[28px] shrink-0 items-center pl-[15px] text-[#9b9997]">
        <Txt w={42}>View</Txt>
        <div className="ml-[9px] flex h-[28px] w-[108px] shrink-0 items-center rounded-[5px] border-[1.500px] border-[#b0aeac] pl-[7px] text-[#b5b3b1]">
          <Txt w={36}>Tree</Txt><span className="ml-[35px] h-[18px] w-px bg-[#c8c6c4]" /><span className="ml-[8px]"><UpDown /></span>
        </div>
      </div>
    </div>
  );
}

/* ---------- status bar ---------- */

function StatusBar() {
  return (
    <div className="flex h-[45px] shrink-0 items-center overflow-hidden border-t border-[#c6c4c2] bg-[#edecea] pl-[112px] text-[#2a2a2a]">
      <Txt w={99}>Coordinate</Txt>
      <div className="ml-[7px] flex h-[28px] w-[180px] shrink-0 items-center rounded-[5px] border-[1.500px] border-[#84817e] bg-white pl-[11px]"><Txt w={153}>6681323,886794</Txt></div>
      <svg className="ml-[5px] block h-[30px] w-[34px] shrink-0" viewBox="0 0 34 30">
        <ellipse cx="25" cy="21" rx="9" ry="8" fill="#cbb8b8" />
        <path d="M3 6Q8 0 15 2L27 14L12 21Q3 14 3 6z" fill="#111" />
        <path d="M6 5L11 13M11 4L16 12M17 7L21 13" stroke="#fff" strokeWidth="1.800" />
        <path d="M9 17Q15 10 24 14" fill="none" stroke="#fff" strokeWidth="1.500" />
        <ellipse cx="19" cy="21" rx="9" ry="6.500" fill="#fff" stroke="#111" strokeWidth="2.800" />
        <circle cx="19.500" cy="21" r="3.300" fill="#111" /><circle cx="19.500" cy="21" r="1.200" fill="#fff" />
        <path d="M21 6L32 2M1 19L5 18" stroke="#111" strokeWidth="1.500" strokeDasharray="3 2" />
      </svg>
      <Txt w={48} className="ml-[18px]">Scale</Txt>
      <div className="ml-[7px] flex h-[28px] w-[159px] shrink-0 overflow-hidden rounded-[5px] border-[1.500px] border-[#84817e] bg-white">
        <div className="flex flex-1 items-center pt-[2px] pl-[6px]"><Txt w={90}>1:117,528</Txt></div>
        <div className="flex w-[36px] items-center justify-center border-l border-[#8c8986] bg-linear-to-b from-white to-[#e4e3e1] text-[#222]"><Chevron /></div>
      </div>
      <svg className="ml-[10px] block h-[30px] w-[26px] shrink-0" viewBox="0 0 26 30"><path d="M5 15V10Q5 2.500 13 2.500T21 10V15" fill="none" stroke="#8b8b89" strokeWidth="4" /><path d="M5 15V10Q5 2.500 13 2.500T21 10V15" fill="none" stroke="#dcdcda" strokeWidth="1.500" /><rect x=".5" y="14" width="25" height="14.500" rx="2" fill="#666664" /></svg>
      <Txt w={82} className="ml-[21px]">Magnifier</Txt>
      <Spin value="100%" tw={49} className="ml-[6px] w-[120px]" />
      <Txt w={74} className="ml-[14px]">Rotation</Txt>
      <Spin value="0.0" tw={28} className="ml-[14px] w-[120px]" />
      <Check on className="ml-[14px]" />
      <Txt w={63} className="ml-[10px]">Render</Txt>
      <svg className="ml-[22px] block h-[28px] w-[32px] shrink-0" viewBox="0 0 32 28" fill="none" stroke="#111" strokeWidth="1.500">
        <ellipse cx="16" cy="14" rx="13" ry="12.500" strokeWidth="1.800" /><ellipse cx="16" cy="14" rx="6.500" ry="12.500" /><ellipse cx="16" cy="14" rx="14" ry="6" />
        <path d="M1.500 14L16 1.500L30.500 14L16 26.500zM10 9H22V19H10z" /><path d="M16 1.500Q6 6 4 14Q6 22 16 26.500Q26 22 28 14Q26 6 16 1.500z" />
      </svg>
      <Txt w={134} className="ml-[6px]">USER:100000 (</Txt>
    </div>
  );
}

/* ---------- task bar ---------- */

function QLogo() {
  return (
    <svg className="block h-[25px] w-[29px] shrink-0" viewBox="0 0 29 25">
      <rect width="29" height="25" fill="#050505" />
      <ellipse cx="13.500" cy="13" rx="6.500" ry="7.800" fill="none" stroke="#e6e84a" strokeWidth="4.500" />
      <path d="M13 14Q16 23 23 21.500" fill="none" stroke="#e6e84a" strokeWidth="3.500" />
      <path d="M13 12L20 5L19 2.500L27 1L25 9L22.500 7.500L15 14z" fill="#1f7a25" />
    </svg>
  );
}

const TASK = "flex h-[30px] w-[172px] shrink-0 items-center overflow-hidden rounded-[5px] border-2 border-[#9b9a98] pl-[3px] text-[#24242c]";

function TaskBar() {
  return (
    <div className="flex h-[32px] shrink-0 items-center overflow-hidden bg-linear-to-b from-[#6a6a6a] via-[#0c0c0c] via-45% to-[#5a5a5a] pl-[6px]">
      <svg className="block h-[28px] w-[42px] shrink-0" viewBox="0 0 42 28"><path d="M0 17Q15 13 24 1Q30 1 33 8Q40 17 41 28Q36 17 27 13Q21 13 17 23Q18 16 19 13Q11 18 5 26Q8 19 14 14Q7 17 0 17z" fill="#b9bbbb" /></svg>
      <svg className="ml-[10px] block h-[24px] w-[22px] shrink-0" viewBox="0 0 22 24"><rect width="22" height="23" rx="3" fill="#262626" /><path d="M3 10H10L12 12H18V16H3z" fill="#eee" /></svg>
      <svg className="ml-[12px] block h-[26px] w-[28px] shrink-0" viewBox="0 0 28 26"><ellipse cx="14" cy="12.500" rx="13.500" ry="12" fill="#3e76b5" /><path d="M4 6L12 3L15 8L9 14L5 12zM16 4L23 6L25 13L19 17L15 12zM8 17L16 16L17 22L11 23z" fill="#b9d3ec" /></svg>
      <svg className="ml-[15px] block h-[24px] w-[30px] shrink-0" viewBox="0 0 30 24"><rect x="9" y="6" width="19" height="16" fill="#e8e8e6" stroke="#aaa" /><path d="M9 6H28V9H9z" fill="#4a7fc0" /><rect x="1" y="2" width="19" height="15" fill="#f2f2f0" stroke="#aaa" /><path d="M1 2H20V5H1z" fill="#4a7fc0" /></svg>
      <svg className="ml-[10px] block h-[28px] w-[42px] shrink-0" viewBox="0 0 42 28"><rect x="1" y="1" width="40" height="26" fill="#d3e1f5" stroke="#f4f8ff" strokeWidth="1.500" /><rect x="2" y="2" width="20" height="12" fill="#84a9dc" /><path d="M26 8Q30 14 24 20Q18 23 16 18" fill="none" stroke="#d9e23c" strokeWidth="4" /><path d="M23 9L28 4V9zM12 18H19L17 21z" fill="#2f7d2f" /></svg>
      <div className="h-[28px] w-[41px] shrink-0 bg-[#a9a7a4]" />
      <div className={`${TASK} ml-[11px] bg-[#c5c3c0]`}><QLogo /><Txt w={119} className="mt-[2px] ml-px">QGIS 2.18.18</Txt></div>
      <div className={`${TASK} ml-[4px] bg-linear-to-b from-white to-[#e9e8e7]`}>
        <svg className="block h-[22px] w-[27px] shrink-0" viewBox="0 0 27 22"><rect x=".5" y=".5" width="26" height="20" fill="#e6e6e5" stroke="#7b98bd" /><path d="M0 0H27V6H0z" fill="#4374b4" /></svg>
        <Txt w={121} className="ml-[2px]">SAMP Root ...</Txt>
      </div>
      <div className={`${TASK} ml-[4px] bg-linear-to-b from-white to-[#e9e8e7]`}><QLogo /><Txt w={125}>QGIS SAMP ...</Txt></div>
      <div className={`${TASK} ml-[4px] bg-linear-to-b from-white to-[#e9e8e7]`}>
        <svg className="block h-[24px] w-[27px] shrink-0" viewBox="0 0 27 24"><ellipse cx="13.500" cy="12" rx="12.500" ry="11.500" fill="#e66f1a" /><ellipse cx="14" cy="9" rx="9" ry="7.500" fill="#4b82bd" /><path d="M12 4L19 5L20 9L15 11z" fill="#a8c9e6" /><path d="M2 4L8 7L13 9L9 12L13 15L20 14L24 6Q28 14 20 20Q10 25 4 18Q0 12 2 4z" fill="#e8701c" /><path d="M22 6Q26 13 19 19Q24 18 25.500 12z" fill="#f7c93a" /></svg>
        <Txt w={132} className="ml-[2px]">Mozilla Firefox</Txt>
      </div>
      <div className={`${TASK} ml-[5px] bg-linear-to-b from-white to-[#e9e8e7]`}><QLogo /><Txt w={132} className="ml-px">http://saada....</Txt></div>
      <svg className="ml-[5px] block h-[27px] w-[51px] shrink-0" viewBox="0 0 51 27"><rect width="51" height="27" fill="#000" /><path d="M0 27V21L5 22L9 20L14 22L19 19L20 21L25 20L30 21L31.500 17L33 20L38 21L44 20L47 21L51 19V27z" fill="#008000" /></svg>
      <svg className="ml-[7px] block h-[24px] w-[24px] shrink-0" viewBox="0 0 24 24"><path d="M0 10H5L13 3V21L5 15H0z" fill="#050505" /><path d="M15 8Q18 12 15 16M18 5Q23 12 18 19" fill="none" stroke="#1a1a1a" strokeWidth="1.500" /></svg>
      <svg className="ml-[10px] block h-[24px] w-[28px] shrink-0" viewBox="0 0 28 24"><path d="M1 4L7 1L21 11L16 17L3 9z" fill="#e8e8e6" /><path d="M15 10L21 13L18 18L13 15z" fill="#aaa" /><path d="M20 16L26 20" stroke="#8a8a88" strokeWidth="4" /><path d="M3 3L6 2L8 4L4 6z" fill="#f2d48a" /></svg>
      <svg className="ml-[8px] block h-[28px] w-[32px] shrink-0" viewBox="0 0 32 28"><rect x="1" y="3" width="19" height="21" fill="#ad8759" /><rect x="7" y="1" width="7" height="4" fill="#b9b9b7" /><path d="M15 11H31V27H15z" fill="#f0f0ee" stroke="#b5b5b3" /><path d="M18 15H27M18 18.500H25M18 22H27" stroke="#aaa" strokeWidth="1.300" /></svg>
      <Txt w={51} className="ml-[10px] text-[#f2f2f2]">08:50</Txt>
      <svg className="ml-[10px] block h-[26px] w-[29px] shrink-0" viewBox="0 0 29 26"><rect x=".7" y="2" width="27" height="17" fill="#5b4a78" stroke="#b9b9b7" strokeWidth="1.400" /><path d="M12 19H17V22H21V25H8V22H12z" fill="#d9d9d7" /><rect x="9.500" y="9.500" width="9.500" height="7" fill="#f0c53e" /><path d="M11.500 9.500V7Q14 3.500 17 7V9.500" fill="none" stroke="#d8d4c8" strokeWidth="1.500" /></svg>
      <svg className="ml-[12px] block h-[20px] w-[24px] shrink-0" viewBox="0 0 24 20"><rect width="24" height="20" fill="#d8151c" /><path d="M8 5.500Q5 8 5.500 11Q7 16 12 16T18.500 11Q19 8 16 5.500M12 3V10" fill="none" stroke="#fff" strokeWidth="2.400" /></svg>
    </div>
  );
}

/* ---------- attribute dialog ---------- */

const ATTRS: [string, number, string, number][] = [
  ["ogc_fid", 64, "63", 22], ["granule_gid", 105, "HRL", 36], ["dataproduct_type", 160, "sc", 19], ["sensor_id", 87, "L", 10],
  ["phase_min", 99, "44.9374351501", 142], ["c3_resol_min", 119, "--", 14], ["target_name", 117, "Mars", 44], ["phase_max", 105, "44.9374351501", 142],
  ["c3_resol_max", 126, "--", 14], ["c1_resol_max", 126, "0.000646651270208", 188],
  ["spatial_coordinate_description", 275, "3396190 +b=3396190 +units=m +no_defs", 399], ["target_class", 110, "planet", 58],
];

function AttributeDialog() {
  return (
    <div className="absolute top-[24px] left-0 flex h-[529px] w-[799px] flex-col border-r-2 border-b-2 border-l-2 border-[#6a6a64] bg-[#edecea]">
      <div className="flex h-[27px] shrink-0 items-center border-b border-[#c8c8ac] bg-linear-to-b from-white via-[#e0e0d8] via-50% to-[#ecece6] pl-[4px] font-bold text-[#767674]">
        <svg className="mb-[1px] block h-[20px] w-[22px] shrink-0" viewBox="0 0 22 20"><ellipse cx="10" cy="11" rx="5.500" ry="6" fill="none" stroke="#dfe25a" strokeWidth="3.500" /><path d="M10 11L14 18L18 17" fill="none" stroke="#d8dc50" strokeWidth="3" /><path d="M8 11L14 5L13 3L20 1L18 8L16 7L10 12zM2 17L7 12" fill="#2f7d2f" stroke="#2f7d2f" /></svg>
        <Txt w={677} className="mb-[2px] ml-[9px]">http://saada.unistra.fr/taphand...E66EDE8E4 - Feature Attributes</Txt>
        <svg className="ml-[17px] block h-[10px] w-[60px] shrink-0" viewBox="0 0 60 10" fill="none" stroke="#6b6b69"><path d="M0 8H9" strokeWidth="2.500" /><path d="M24 2H32.500V8.500H24z" strokeWidth="1.300" /><path d="M24 2H32.500" strokeWidth="2.500" /><path d="M49 1.500L56 8.500M56 1.500L49 8.500" strokeWidth="3" /></svg>
      </div>
      <div className="flex h-[449px] shrink-0 overflow-hidden">
        <div className="flex w-[741px] shrink-0 flex-col gap-[9.750px] overflow-hidden pt-[23px] pl-[26px]">
          {ATTRS.map(([label, lw, value, vw], i) => (
            <div key={label} className="flex h-[28px] shrink-0 items-center text-[#1e1e1e]">
              <div className={`w-[286px] shrink-0 pl-[0.500px] ${i === 11 ? "pt-[6px]" : "pt-[2px]"}`}><Txt w={lw}>{label}</Txt></div>
              <div className={`flex h-[28px] w-[429px] shrink-0 items-center overflow-hidden rounded-[5px] border-[1.500px] border-[#84817e] bg-white text-[#868482] ${i === 11 ? "pt-[6px]" : "pt-px"} ${i === 10 ? "" : "pl-[5px]"}`}>
                <Txt w={vw} className={i === 10 ? "ml-[-3px]" : ""}>{value}</Txt>
              </div>
            </div>
          ))}
        </div>
        <div className="mt-[11px] ml-[19px] flex h-[438px] w-[21px] shrink-0 flex-col overflow-hidden rounded-[4px] border border-[#8c8986] bg-[#d5d3d1]">
          <div className="flex h-[16px] items-center justify-center bg-[#f4f4f3] text-[#b5b3b1]"><Chevron dir="up" className="w-[11px]" /></div>
          <div className={`${vThumb} h-[78px]`}><Grip vertical /></div>
          <div className="flex-1" />
          <div className="flex h-[17px] items-center justify-center border-t border-[#8c8986] bg-[#f4f4f3] text-[#222]"><Chevron className="w-[11px]" /></div>
        </div>
      </div>
      <div className="mt-[9px] ml-[532px] flex gap-[11px]">
        <div className={`${btn} h-[30px] w-[119px] rounded-[5px] pt-px text-[#111]`}><Txt w={60}><span className="underline underline-offset-2">C</span>ancel</Txt></div>
        <div className="flex h-[30px] w-[118px] items-center justify-center rounded-[5px] border-[1.500px] border-[#b0aeac] bg-linear-to-b from-[#efeeed] to-[#e2e1df] pt-px text-[#b0aeac]"><Txt w={25}><span className="underline underline-offset-2">O</span>K</Txt></div>
      </div>
    </div>
  );
}

/* ---------- application ---------- */

export default function App() {
  return (
    <div className="relative flex h-[958px] w-[1456px] flex-col overflow-hidden bg-[#edecea] font-['DejaVu_Sans',sans-serif] text-[15px] leading-[20px]">
      <div className="relative flex h-[24px] shrink-0 items-center bg-linear-to-b from-[#5a574d] to-[#3c3b37] pl-[7px]">
        <svg className="block h-[18px] w-[66px] shrink-0" viewBox="0 0 66 18">
          <circle cx="8" cy="9" r="8" fill="#ee6237" stroke="#33322e" strokeWidth=".8" /><path d="M5.300 6.300L10.700 11.700M10.700 6.300L5.300 11.700" stroke="#5e2410" strokeWidth="1.500" />
          <circle cx="32" cy="9" r="8" fill="#7b7970" stroke="#33322e" strokeWidth=".8" /><path d="M28 9.500H36" stroke="#35342f" strokeWidth="1.200" />
          <circle cx="56" cy="9" r="8" fill="#7b7970" stroke="#33322e" strokeWidth=".8" /><path d="M52.500 5.500H59.500V12.500H52.500z" fill="none" stroke="#35342f" strokeWidth="1.200" />
        </svg>
        <Txt w={349} className="ml-[480px] font-['Open_Sans',sans-serif] text-[14px] font-bold text-[#dfdbd2]">Debian32QGIS [Running] - Oracle VM VirtualBox</Txt>
      </div>
      <div className="flex h-[26px] shrink-0 items-center bg-linear-to-b from-[#555] via-[#3c3c3c] via-45% to-[#1e1e1e] pl-[787px] font-bold text-white">
        <Txt w={48} className="mb-px">8.18</Txt>
      </div>
      <div className="flex h-[28px] shrink-0 items-center border-b border-[#d0cecc] bg-linear-to-b from-[#eeeeec] to-[#e3e2e0] text-[#222]">
        <Txt w={101} className="ml-[776px]">Pro<span className="underline underline-offset-2">c</span>essing</Txt>
        <Txt w={40} className="ml-[26px]"><span className="underline underline-offset-2">H</span>elp</Txt>
      </div>
      <ToolbarMain />
      <ToolbarLabels />
      <div className="h-[49px] shrink-0 border-t border-b-2 border-t-white border-b-[#bdbbb9] bg-linear-to-b from-[#f5f5f4] to-[#e4e3e1]" />
      <div className="flex h-[657px] shrink-0 overflow-hidden">
        <SideTools />
        <Docks />
        <div className="w-[10px] shrink-0 border-r border-[#a5a3a0]" />
        <MapCanvas />
        <IdentifyPanel />
      </div>
      <StatusBar />
      <TaskBar />
      <AttributeDialog />
      <div className="absolute top-[300px] left-[1181px] flex h-[28px] w-[173px] items-center border border-[#b9b85a] bg-[#f6f5b6] pl-[5px] text-[#222]">
        <Txt w={160}>View feature form</Txt>
      </div>
      <svg className="absolute top-[279px] left-[1355px] h-[24px] w-[18px]" viewBox="0 0 18 24"><path d="M1 1L1.500 17L5.500 14L9 22L12.500 20.500L9 13L15.500 12.500z" fill="#0a0a0a" stroke="#fff" strokeWidth="1.200" /></svg>
    </div>
  );
}
